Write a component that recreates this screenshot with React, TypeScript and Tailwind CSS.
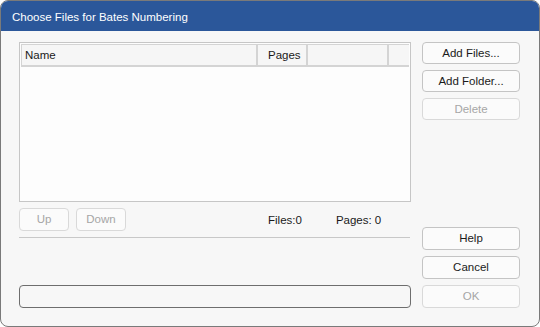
import React from "react";

const font = { fontFamily: '"Liberation Sans", Arial, sans-serif' };

function Btn({ label, disabled }: { label: string; disabled?: boolean }) {
  return (
    <div
      className={`h-full w-full flex items-center justify-center pt-[1px] rounded-[4px] border bg-[#fbfbfb] text-[11.5px] ${
        disabled ? "border-[#d9d9d9] text-[#a6a6a6]" : "border-[#c4c4c4] text-[#1a1a1a]"
      }`}
    >
      {label}
    </div>
  );
}

export default function App() {
  return (
    <div style={font} className="w-[540px] h-[327px] bg-white">
      <div className="w-[540px] h-[327px] rounded-[8px] border border-[#7a7a7a] overflow-hidden bg-[#f7f7f7] flex flex-col">
        <div className="h-[30px] bg-[#2b579a] flex items-center pl-[11px] pt-[3px] text-white text-[11.5px] leading-none">
          Choose Files for Bates Numbering
        </div>
        <div className="flex flex-1 pt-[11px] pl-[18px] pr-[19px] pb-[18px] gap-[11px]">
          {/* left column */}
          <div className="w-[392px] flex flex-col">
            <div className="h-[160px] border border-[#c6c6c6] bg-[#fdfdfd] p-[1px] flex flex-col">
              <div className="h-[23px] flex border-l border-t border-b-2 border-[#d4d4d4] bg-[#f6f6f6] text-[11.5px] text-[#1a1a1a]">
                <div className="w-[236px] border-r-2 border-[#d4d4d4] flex items-center pl-[3px] pt-[2px]">Name</div>
                <div className="w-[50px] border-r-2 border-[#d4d4d4] flex items-center pl-[10px] pt-[2px]">Pages</div>
                <div className="w-[81px] border-r-2 border-[#d4d4d4]"></div>
                <div className="flex-1"></div>
              </div>
              <div className="flex-1 bg-[#fdfdfd]"></div>
            </div>
            <div className="mt-[6px] h-[23px] flex items-center text-[11.5px]">
              <div className="h-[23px] w-[50px]"><Btn label="Up" disabled /></div>
              <div className="h-[23px] w-[50px] ml-[7px]"><Btn label="Down" disabled /></div>
              <div className="ml-[142px] pt-[2px] text-[#1a1a1a]">Files:0</div>
              <div className="ml-[34px] pt-[2px] text-[#1a1a1a]">Pages: 0</div>
            </div>
            <div className="mt-[6px] h-px bg-[#c8c8c8] mr-[1px]"></div>
            <div className="flex-1"></div>
            <div className="h-[23px] rounded-[4px] border border-[#6e6e6e] bg-[#f7f7f7]"></div>
          </div>
          {/* right column */}
          <div className="w-[98px] flex flex-col">
            <div className="flex flex-col gap-[6px]">
              <div className="h-[22px]"><Btn label="Add Files..." /></div>
              <div className="h-[22px]"><Btn label="Add Folder..." /></div>
              <div className="h-[22px]"><Btn label="Delete" disabled /></div>
            </div>
            <div className="flex-1"></div>
            <div className="flex flex-col gap-[6px]">
              <div className="h-[23px]"><Btn label="Help" /></div>
              <div className="h-[23px]"><Btn label="Cancel" /></div>
              <div className="h-[23px]"><Btn label="OK" disabled /></div>
            </div>
          </div>
        </div>
      </div>
    </div>
  );
}
